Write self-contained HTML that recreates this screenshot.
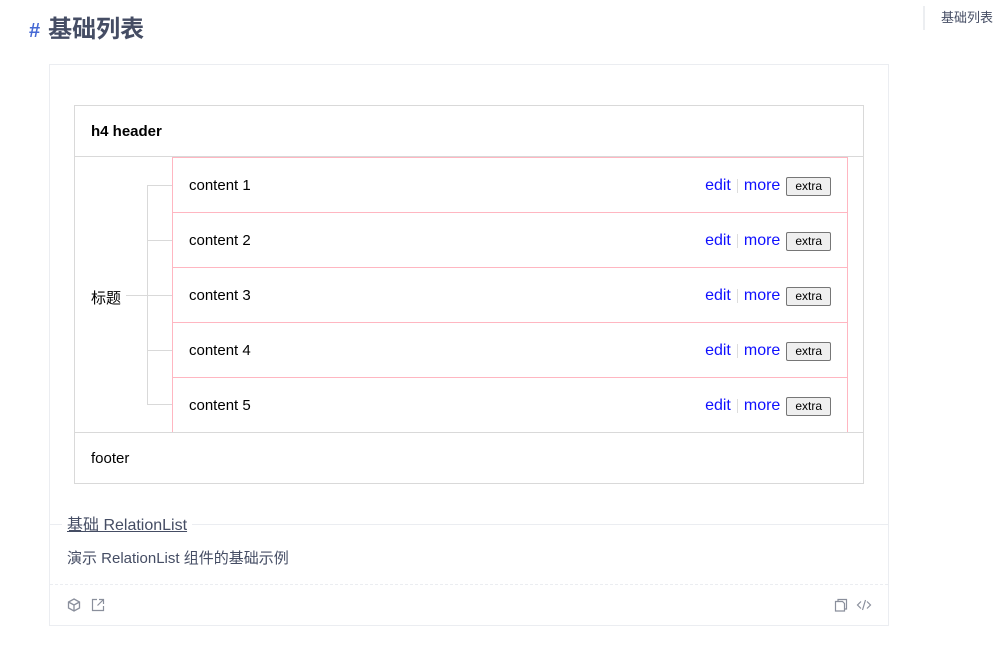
<!DOCTYPE html>
<html><head><meta charset="utf-8"><style>
*{box-sizing:border-box;margin:0;padding:0}
body{width:1000px;height:651px;background:#fff;font-family:"Liberation Sans","Noto Sans CJK SC",sans-serif;position:relative;overflow:hidden}
.abs{position:absolute}
h1{position:absolute;left:29px;top:15px;font-size:24px;color:#454d64;font-weight:bold;line-height:30px}
h1 span{color:#4569d4;font-size:20px;margin-right:8px}
.toc{left:923px;top:6px;height:24px;border-left:2px solid #eceef1;padding-left:16px;font-size:13px;color:#454d64;line-height:24px}
.outer{left:49px;top:64px;width:840px;height:562px;border:1px solid #ebedf1}
.list{left:74px;top:105px;width:790px;height:379px;border:1px solid #d9d9d9}
.hdr{left:0;top:0;width:788px;height:51px;border-bottom:1px solid #d9d9d9;font-weight:bold;font-size:15px;line-height:51px;padding-left:16px;color:#000}
.ftr{left:0;top:326px;width:788px;height:51px;border-top:1px solid #d9d9d9;font-size:15px;line-height:52px;padding-left:16px;color:#000}
.row{position:absolute;left:97px;width:676px;height:56px;border:1px solid #ffb6c1;font-size:15px;color:#000;line-height:56px;padding-left:16px}
.acts{position:absolute;right:16px;top:1px;height:54px;display:flex;align-items:center}
.acts a{color:#1010ff;font-size:16px;text-decoration:none}
.sep{width:1px;height:14px;background:#ddd;margin:0 6px}
.btn{margin-left:6px;border:1px solid #767676;background:#efefef;border-radius:2px;font-size:12px;padding:0 8px;height:19px;line-height:17px;color:#000}
.line{background:#d9d9d9}
</style></head><body>
<h1><span>#</span>基础列表</h1>
<div class="abs toc">基础列表</div>
<div class="abs outer">
 <div class="abs" style="left:0;top:459px;width:838px;height:1px;background:#ebedf1"></div>
 <div class="abs" style="left:12px;top:451px;background:#fff;padding:0 5px;font-size:16px;color:#454d64;text-decoration:underline;line-height:19px">基础 RelationList</div>
 <div class="abs" style="left:17px;top:482px;font-size:15px;color:#454d64">演示 RelationList 组件的基础示例</div>
 <div class="abs" style="left:0;top:519px;width:838px;border-top:1px dashed #ebedf1"></div>
 <svg class="abs" style="left:17px;top:533px" width="14" height="14" viewBox="0 0 14 14" fill="none" stroke="#8a8f9c" stroke-width="1.3"><path d="M7 1L12.5 4V10L7 13L1.5 10V4Z M1.5 4L7 7L12.5 4 M7 7V13"/></svg>
 <svg class="abs" style="left:41px;top:533px" width="14" height="14" viewBox="0 0 14 14" fill="none" stroke="#8a8f9c" stroke-width="1.2"><path d="M6 1.5H1.5V12.5H12.5V8 M8 1.5H12.5V6 M12.5 1.5L6.5 7.5"/></svg>
 <svg class="abs" style="left:784px;top:533px" width="14" height="14" viewBox="0 0 14 14" fill="none" stroke="#8a8f9c" stroke-width="1.2"><path d="M4 3.5V1.5H12.5V11H10.5 M1.5 3.5H8.5L10.5 5.5V13H1.5Z"/></svg>
 <svg class="abs" style="left:806px;top:533px" width="16" height="14" viewBox="0 0 16 14" fill="none" stroke="#8a8f9c" stroke-width="1.2"><path d="M5 3.5L1.5 7L5 10.5 M11 3.5L14.5 7L11 10.5 M9.5 2L6.5 12"/></svg>
</div>
<div class="abs list">
 <div class="abs hdr">h4 header</div>
 <div class="abs" style="left:16px;top:181px;font-size:15px;color:#000">标题</div>
 <div class="abs line" style="left:51px;top:189px;width:22px;height:1px"></div>
 <div class="abs line" style="left:72px;top:79px;width:1px;height:220px"></div>
 <div class="abs line" style="left:72px;top:79px;width:25px;height:1px"></div>
 <div class="abs line" style="left:72px;top:134px;width:25px;height:1px"></div>
 <div class="abs line" style="left:72px;top:189px;width:25px;height:1px"></div>
 <div class="abs line" style="left:72px;top:244px;width:25px;height:1px"></div>
 <div class="abs line" style="left:72px;top:298px;width:25px;height:1px"></div>
 <div class="row" style="top:51px">content 1<div class="acts"><a>edit</a><span class="sep"></span><a>more</a><span class="btn">extra</span></div></div>
 <div class="row" style="top:106px">content 2<div class="acts"><a>edit</a><span class="sep"></span><a>more</a><span class="btn">extra</span></div></div>
 <div class="row" style="top:161px">content 3<div class="acts"><a>edit</a><span class="sep"></span><a>more</a><span class="btn">extra</span></div></div>
 <div class="row" style="top:216px">content 4<div class="acts"><a>edit</a><span class="sep"></span><a>more</a><span class="btn">extra</span></div></div>
 <div class="row" style="top:271px">content 5<div class="acts"><a>edit</a><span class="sep"></span><a>more</a><span class="btn">extra</span></div></div>
 <div class="abs ftr">footer</div>
</div>
</body></html>
